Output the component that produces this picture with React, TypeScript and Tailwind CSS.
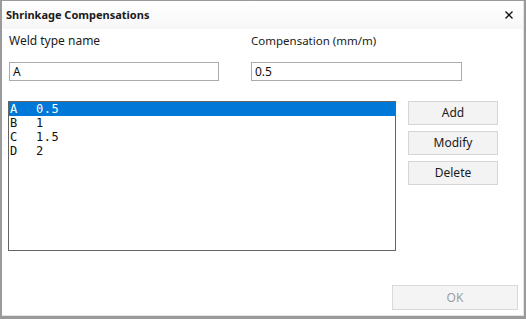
const rows = [
  { name: "A", value: "0.5" },
  { name: "B", value: "1" },
  { name: "C", value: "1.5" },
  { name: "D", value: "2" },
];

const font = { fontFamily: '"Noto Sans", "Open Sans", sans-serif' };

function SideButton({ label }: { label: string }) {
  return (
    <button className="flex h-[24px] w-[90px] items-center justify-center border border-[#d6d6d6] bg-[#f3f3f4] text-[12px] text-[#1a1a1a]">
      {label}
    </button>
  );
}

export default function App() {
  return (
    <div
      className="flex h-[319px] w-[526px] flex-col bg-[#9a9a9a] pb-[3px] pl-[2px] pr-[2px] pt-[1px]"
      style={font}
    >
      <div className="flex flex-1 flex-col border-r border-b border-[#e4e4e8] bg-white">
        {/* Title bar */}
        <div className="flex h-[28px] items-center justify-between bg-gradient-to-b from-white to-[#f7f7f7] pl-[4px] pr-[10px]">
          <span className="text-[11px] font-bold text-[#1a1a1a]">
            Shrinkage Compensations
          </span>
          <svg width="8" height="8" viewBox="0 0 8 8" aria-hidden="true">
            <path d="M0.5 0.5 L7.5 7.5 M7.5 0.5 L0.5 7.5" stroke="#111" strokeWidth="1.3" />
          </svg>
        </div>

        {/* Fields */}
        <div className="flex pl-[7px] pt-[4px]">
          <div className="flex w-[242px] flex-col">
            <span className="h-[16px] text-[12px] leading-[16px] text-[#1a1a1a]">Weld type name</span>
            <div className="mt-[13px] flex h-[19px] w-[210px] items-center border border-[#ababab] bg-white pl-[3px] text-[12px] text-[#111]">
              A
            </div>
          </div>
          <div className="flex flex-col">
            <span className="h-[16px] text-[11.5px] leading-[16px] text-[#1a1a1a]">Compensation (mm/m)</span>
            <div className="mt-[13px] flex h-[19px] w-[211px] items-center border border-[#ababab] bg-white pl-[3px] text-[12px] text-[#111]">
              0.5
            </div>
          </div>
        </div>

        {/* List + buttons */}
        <div className="mt-[20px] flex pl-[6px]">
          <div className="h-[150px] w-[388px] border border-[#646464] bg-white">
            {rows.map((r, i) => (
              <div
                key={r.name}
                className={`flex h-[14px] items-center text-[12px] leading-[14px] ${
                  i === 0 ? "bg-[#0078d7] text-white" : "text-[#111]"
                }`}
                style={{ fontFamily: '"DejaVu Sans Mono", "Liberation Mono", monospace' }}
              >
                <span className="w-[27px] pl-[1px]">{r.name}</span>
                <span className="tracking-[0.5px]">{r.value}</span>
              </div>
            ))}
          </div>
          <div className="ml-[12px] flex flex-col gap-[6px]">
            <SideButton label="Add" />
            <SideButton label="Modify" />
            <SideButton label="Delete" />
          </div>
        </div>

        {/* Footer */}
        <div className="mt-auto flex justify-end pb-[5px] pr-[5px]">
          <button className="flex h-[25px] w-[126px] items-center justify-center border border-[#d9d9d9] bg-[#f4f4f5] text-[12px] text-[#9e9e9e]">
            OK
          </button>
        </div>
      </div>
    </div>
  );
}
